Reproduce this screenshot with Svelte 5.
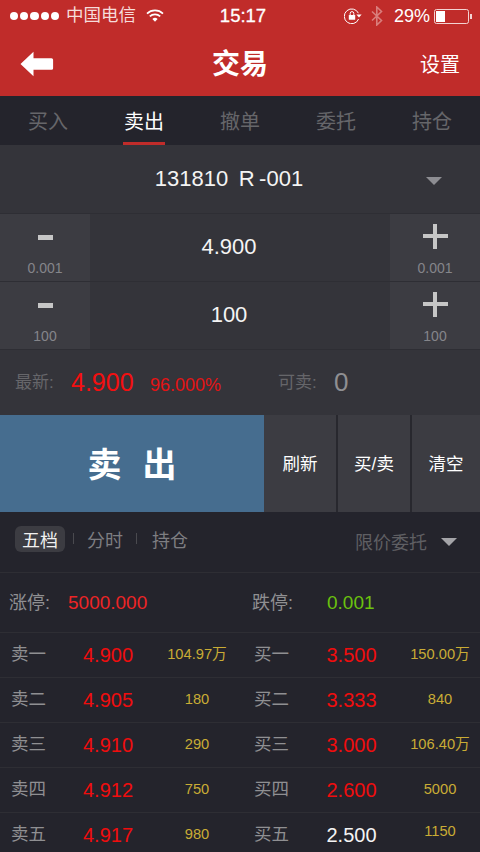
<script>
  const tabs = ['买入', '卖出', '撤单', '委托', '持仓'];
  const steppers = [
    { value: '4.900', step: '0.001' },
    { value: '100', step: '100' }
  ];
  const rows = [
    ['卖一', '4.900', '104.97万', '买一', '3.500', '150.00万', 'red', false],
    ['卖二', '4.905', '180', '买二', '3.333', '840', 'red', false],
    ['卖三', '4.910', '290', '买三', '3.000', '106.40万', 'red', false],
    ['卖四', '4.912', '750', '买四', '2.600', '5000', 'red', false],
    ['卖五', '4.917', '980', '买五', '2.500', '1150', 'white', true]
  ];
</script>

<div class="page">
  <header class="top">
    <div class="status">
      <div class="st-left">
        <span class="dots"><i></i><i></i><i></i><i></i><i></i></span>
        <span class="carrier">中国电信</span>
        <svg class="wifi" width="18" height="14" viewBox="0 0 18 14">
          <path d="M1 4.6a11.5 11.5 0 0 1 16 0" fill="none" stroke="#fff" stroke-width="1.7"/>
          <path d="M3.8 7.4a7.5 7.5 0 0 1 10.4 0" fill="none" stroke="#fff" stroke-width="1.7"/>
          <path d="M6.4 10a3.6 3.6 0 0 1 5.2 0L9 12.8z" fill="#fff"/>
        </svg>
      </div>
      <div class="time">15:17</div>
      <div class="st-right">
        <svg class="rot" width="18" height="16" viewBox="0 0 18 16">
          <path d="M14.4 5.2A7.4 7.4 0 1 0 14.6 11" fill="none" stroke="#fff" stroke-width="1"/>
          <path d="M12.4 6.6h5.2l-2.6 2.8z" fill="#fff"/>
          <rect x="4.8" y="7" width="6.4" height="4.8" rx=".6" fill="#fff"/>
          <path d="M6.2 7V5.4a1.8 1.8 0 0 1 3.6 0V7" fill="none" stroke="#fff" stroke-width="1"/>
        </svg>
        <svg class="bt" width="12" height="20" viewBox="0 0 12 20">
          <path d="M1 5.5l9.5 9L5.8 19V1l4.7 4.5L1 14.5" fill="none" stroke="#d97e7c" stroke-width="1.6"/>
        </svg>
        <span class="pct">29%</span>
        <span class="battery"><span class="fill"></span></span>
        <span class="nub"></span>
      </div>
    </div>
    <div class="nav">
      <svg class="back" width="34" height="26" viewBox="0 0 34 26">
        <path d="M0.5 13L13.5 0.8V7.2H31.5a1.6 1.6 0 0 1 1.6 1.6v8.4a1.6 1.6 0 0 1-1.6 1.6H13.5v6.4z" fill="#fff"/>
      </svg>
      <h1>交易</h1>
      <span class="setting">设置</span>
    </div>
  </header>

  <nav class="tabs">
    {#each tabs as t, i}
      <div class="tab" class:on={i === 1}>{t}</div>
    {/each}
  </nav>

  <section class="panel">
    <div class="picker">
      <span class="code">131810&nbsp;&thinsp;R&thinsp;-001</span>
      <span class="caret big"></span>
    </div>
    {#each steppers as s}
      <div class="stepper">
        <div class="side">
          <span class="minus"></span>
          <span class="step">{s.step}</span>
        </div>
        <div class="val">{s.value}</div>
        <div class="side">
          <span class="plus"></span>
          <span class="step">{s.step}</span>
        </div>
      </div>
    {/each}
    <div class="info">
      <span class="lab">最新:</span>
      <span class="last">4.900</span>
      <span class="chg">96.000%</span>
      <span class="lab">可卖:</span>
      <span class="zero">0</span>
    </div>
  </section>

  <section class="actions">
    <button class="sell">卖 出</button>
    <button class="act first">刷新</button>
    <button class="act mid">买/卖</button>
    <button class="act">清空</button>
  </section>

  <section class="subbar">
    <span class="chip">五档</span>
    <span class="sep"></span>
    <span class="sub">分时</span>
    <span class="sep two"></span>
    <span class="sub">持仓</span>
    <span class="limit">限价委托</span>
    <span class="caret"></span>
  </section>

  <section class="stops">
    <span class="slab">涨停:</span>
    <span class="up">5000.000</span>
    <span class="slab">跌停:</span>
    <span class="down">0.001</span>
  </section>

  <section class="book">
    {#each rows as r}
      <div class="row">
        <span class="rl">{r[0]}</span>
        <span class="rp">{r[1]}</span>
        <span class="rv">{r[2]}</span>
        <span></span>
        <span class="rl">{r[3]}</span>
        <span class="rp" class:flat={r[6] === 'white'}>{r[4]}</span>
        <span class="rv" class:lift={r[7]}>{r[5]}</span>
      </div>
    {/each}
  </section>
</div>

<style>
  :global(body) {
    margin: 0;
    background: #24242c;
  }
  .page {
    width: 480px;
    height: 852px;
    overflow: hidden;
    background: #24242c;
    font-family: "Liberation Sans", "Noto Sans CJK SC", sans-serif;
    color: #fff;
  }
  .top {
    height: 96px;
    background: #c02c2a;
  }
  .status {
    height: 32px;
    display: grid;
    grid-template-columns: 1fr auto 1fr;
    align-items: center;
    padding: 0 8px 0 10px;
    font-size: 17px;
  }
  .st-left, .st-right {
    display: flex;
    align-items: center;
  }
  .st-right {
    justify-content: flex-end;
  }
  .dots {
    display: flex;
    gap: 2px;
  }
  .dots i {
    width: 8.2px;
    height: 8.2px;
    border-radius: 50%;
    background: #fff;
  }
  .carrier {
    margin: -3px 0 0 7px;
    font-size: 17.5px;
    line-height: 24px;
    color: #f6dcdb;
  }
  .wifi {
    margin-left: 10px;
  }
  .time {
    font-size: 18.5px;
    padding-left: 4px;
    -webkit-text-stroke: .3px #fff;
  }
  .rot {
    margin-right: 9px;
  }
  .bt {
    margin-right: 11px;
  }
  .pct {
    font-size: 18px;
    margin-right: 4px;
  }
  .battery {
    box-sizing: border-box;
    width: 35px;
    height: 15px;
    border: 1px solid #f3d3d2;
    border-radius: 2.5px;
    padding: 1px;
    display: block;
  }
  .fill {
    display: block;
    width: 9px;
    height: 100%;
    background: #fff;
  }
  .nub {
    width: 2px;
    height: 5px;
    margin-left: 1px;
    background: #f3d3d2;
  }
  .nav {
    height: 64px;
    display: grid;
    grid-template-columns: 1fr auto 1fr;
    align-items: center;
    padding: 0 20px;
  }
  h1 {
    margin: 1px 0 0 0;
    font-size: 28px;
    line-height: 36px;
    font-weight: 700;
  }
  .setting {
    justify-self: end;
    font-size: 20px;
    margin-bottom: 1px;
  }
  .tabs {
    height: 49px;
    display: grid;
    grid-template-columns: repeat(5, 96px);
  }
  .tab {
    position: relative;
    height: 49px;
    text-align: center;
    font-size: 20px;
    line-height: 52px;
    color: #66666a;
  }
  .tab.on {
    color: #fff;
  }
  .tab.on::after {
    content: "";
    position: absolute;
    left: 27px;
    width: 42px;
    bottom: 0;
    height: 3px;
    background: #c02c2a;
  }
  .panel {
    background: #34343a;
  }
  .picker {
    height: 69px;
    display: grid;
    align-items: center;
    justify-items: center;
    position: relative;
    border-bottom: 1px solid #2e2e34;
    box-sizing: border-box;
    padding-right: 22px;
  }
  .code {
    font-size: 22px;
    color: #f4f4f4;
  }
  .caret {
    width: 0;
    height: 0;
    border-left: 8px solid transparent;
    border-right: 8px solid transparent;
    border-top: 8px solid #a4a4a8;
  }
  .caret.big {
    position: absolute;
    right: 38px;
    top: 32px;
    border-top-color: #8d8d92;
  }
  .stepper {
    height: 68px;
    display: grid;
    grid-template-columns: 90px 1fr 90px;
    border-bottom: 1px solid #2e2e34;
    box-sizing: border-box;
  }
  .side {
    background: #3c3c42;
    position: relative;
    text-align: center;
  }
  .minus {
    position: absolute;
    left: 38px;
    top: 21px;
    width: 15px;
    height: 5px;
    background: #c6c6c6;
  }
  .plus {
    position: absolute;
    left: 32px;
    top: 9px;
    width: 26px;
    height: 26px;
    background:
      linear-gradient(#c6c6c6, #c6c6c6) center / 25px 4px no-repeat,
      linear-gradient(#c6c6c6, #c6c6c6) center / 4px 25px no-repeat;
  }
  .step {
    position: absolute;
    left: 0;
    right: 0;
    top: 45px;
    font-size: 14px;
    line-height: 18px;
    color: #85858a;
  }
  .val {
    text-align: center;
    font-size: 22px;
    line-height: 66px;
    padding-right: 22px;
    color: #f4f4f4;
  }
  .info {
    height: 65px;
    display: flex;
    align-items: center;
    padding-left: 15px;
  }
  .lab {
    font-size: 17px;
    line-height: 22px;
    color: #66666a;
    width: 56px;
  }
  .last {
    font-size: 25px;
    color: #f40f10;
    width: 79px;
  }
  .chg {
    font-size: 18px;
    color: #e41314;
    padding-top: 6px;
    width: 128px;
  }
  .zero {
    font-size: 26px;
    color: #8f8f92;
  }
  .actions {
    height: 97px;
    display: flex;
    background: #28282e;
  }
  button {
    border: 0;
    padding: 0;
    margin: 0;
    font-family: inherit;
    color: #fff;
  }
  .sell {
    width: 264px;
    background: #466d8f;
    font-size: 34px;
    font-weight: 700;
    word-spacing: 11.6px;
    padding-bottom: 3px;
  }
  .act {
    flex: 1;
    background: #3c3c42;
    font-size: 17.5px;
    margin-left: 2px;
    padding-bottom: 2px;
  }
  .act.first {
    flex: 0 0 72px;
    margin-left: 0;
  }
  .act.mid {
    flex: 0 0 72px;
  }
  .subbar {
    height: 60px;
    box-sizing: border-box;
    display: flex;
    align-items: center;
    padding: 0 23px 7px 15px;
  }
  .chip {
    background: #3c3c42;
    border-radius: 6px;
    font-size: 18px;
    line-height: 22px;
    padding: 4px 7px 0;
    color: #f0f0f0;
  }
  .sep {
    width: 1px;
    height: 11px;
    background: #4a4a4f;
    margin: 0 13px 0 8px;
  }
  .sep.two {
    margin: 0 15px 0 13px;
  }
  .sub {
    font-size: 18px;
    color: #7e7e82;
  }
  .limit {
    margin-left: auto;
    font-size: 18px;
    color: #5f5f63;
    margin-right: 14px;
    padding-top: 5px;
  }
  .subbar .caret {
    margin-top: 7px;
    border-top-color: #a4a4a8;
  }
  .stops {
    height: 60px;
    box-sizing: border-box;
    display: grid;
    grid-template-columns: 59px 184px 75px 1fr;
    align-items: center;
    padding-left: 9px;
    border-top: 1px solid #2e2e34;
  }
  .slab {
    font-size: 18px;
    line-height: 22px;
    color: #8f8f92;
  }
  .up {
    font-size: 19px;
    color: #ee2526;
  }
  .down {
    font-size: 19px;
    color: #6bc20e;
  }
  .row {
    height: 45px;
    box-sizing: border-box;
    display: grid;
    grid-template-columns: 48px 96px 82px 17px 48px 97px 80px;
    align-items: center;
    padding: 0 0 2px 12px;
    border-top: 1px solid #2e2e34;
  }
  .rl {
    font-size: 17.5px;
    line-height: 22px;
    margin: 0 0 0 -1px;
    color: #8f8f92;
  }
  .rp {
    text-align: center;
    font-size: 20px;
    color: #f00d0e;
    padding-top: 3px;
  }
  .rp.flat {
    color: #f4f4f4;
  }
  .rv {
    text-align: center;
    font-size: 14.7px;
    line-height: 18px;
    color: #c9ac35;
  }
  .rv.lift {
    margin-top: -6px;
  }
</style>
